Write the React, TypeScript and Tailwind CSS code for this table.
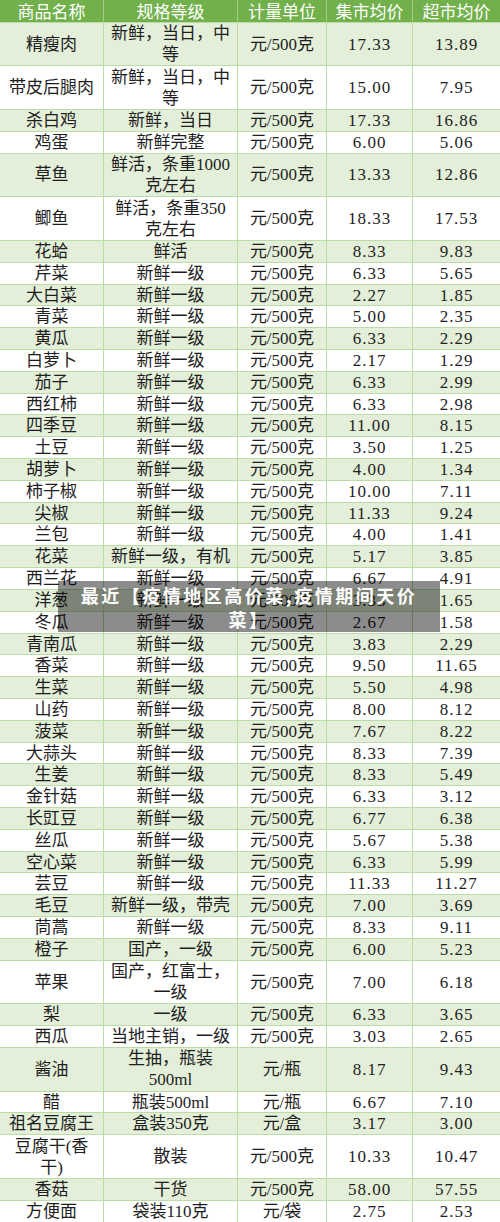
import React from "react";

type Row = [string, string, string, string, string];

const rows: Row[] = [
  ["精瘦肉", "新鲜，当日，中\n等", "元/500克", "17.33", "13.89"],
  ["带皮后腿肉", "新鲜，当日，中\n等", "元/500克", "15.00", "7.95"],
  ["杀白鸡", "新鲜，当日", "元/500克", "17.33", "16.86"],
  ["鸡蛋", "新鲜完整", "元/500克", "6.00", "5.06"],
  ["草鱼", "鲜活，条重1000\n克左右", "元/500克", "13.33", "12.86"],
  ["鲫鱼", "鲜活，条重350\n克左右", "元/500克", "18.33", "17.53"],
  ["花蛤", "鲜活", "元/500克", "8.33", "9.83"],
  ["芹菜", "新鲜一级", "元/500克", "6.33", "5.65"],
  ["大白菜", "新鲜一级", "元/500克", "2.27", "1.85"],
  ["青菜", "新鲜一级", "元/500克", "5.00", "2.35"],
  ["黄瓜", "新鲜一级", "元/500克", "6.33", "2.29"],
  ["白萝卜", "新鲜一级", "元/500克", "2.17", "1.29"],
  ["茄子", "新鲜一级", "元/500克", "6.33", "2.99"],
  ["西红柿", "新鲜一级", "元/500克", "6.33", "2.98"],
  ["四季豆", "新鲜一级", "元/500克", "11.00", "8.15"],
  ["土豆", "新鲜一级", "元/500克", "3.50", "1.25"],
  ["胡萝卜", "新鲜一级", "元/500克", "4.00", "1.34"],
  ["柿子椒", "新鲜一级", "元/500克", "10.00", "7.11"],
  ["尖椒", "新鲜一级", "元/500克", "11.33", "9.24"],
  ["兰包", "新鲜一级", "元/500克", "4.00", "1.41"],
  ["花菜", "新鲜一级，有机", "元/500克", "5.17", "3.85"],
  ["西兰花", "新鲜一级", "元/500克", "6.67", "4.91"],
  ["洋葱", "新鲜一级", "元/500克", "3.33", "1.65"],
  ["冬瓜", "新鲜一级", "元/500克", "2.67", "1.58"],
  ["青南瓜", "新鲜一级", "元/500克", "3.83", "2.29"],
  ["香菜", "新鲜一级", "元/500克", "9.50", "11.65"],
  ["生菜", "新鲜一级", "元/500克", "5.50", "4.98"],
  ["山药", "新鲜一级", "元/500克", "8.00", "8.12"],
  ["菠菜", "新鲜一级", "元/500克", "7.67", "8.22"],
  ["大蒜头", "新鲜一级", "元/500克", "8.33", "7.39"],
  ["生姜", "新鲜一级", "元/500克", "8.33", "5.49"],
  ["金针菇", "新鲜一级", "元/500克", "6.33", "3.12"],
  ["长豇豆", "新鲜一级", "元/500克", "6.77", "6.38"],
  ["丝瓜", "新鲜一级", "元/500克", "5.67", "5.38"],
  ["空心菜", "新鲜一级", "元/500克", "6.33", "5.99"],
  ["芸豆", "新鲜一级", "元/500克", "11.33", "11.27"],
  ["毛豆", "新鲜一级，带壳", "元/500克", "7.00", "3.69"],
  ["茼蒿", "新鲜一级", "元/500克", "8.33", "9.11"],
  ["橙子", "国产，一级", "元/500克", "6.00", "5.23"],
  ["苹果", "国产，红富士，\n一级", "元/500克", "7.00", "6.18"],
  ["梨", "一级", "元/500克", "6.33", "3.65"],
  ["西瓜", "当地主销，一级", "元/500克", "3.03", "2.65"],
  ["酱油", "生抽，瓶装\n500ml", "元/瓶", "8.17", "9.43"],
  ["醋", "瓶装500ml", "元/瓶", "6.67", "7.10"],
  ["祖名豆腐王", "盒装350克", "元/盒", "3.17", "3.00"],
  ["豆腐干(香\n干)", "散装", "元/500克", "10.33", "10.47"],
  ["香菇", "干货", "元/500克", "58.00", "57.55"],
  ["方便面", "袋装110克", "元/袋", "2.75", "2.53"],
];

const headers = ["商品名称", "规格等级", "计量单位", "集市均价", "超市均价"];

const body = { fontFamily: '"Liberation Serif", "Noto Sans CJK SC", serif' };
const head = { fontFamily: '"Noto Sans CJK SC", "Noto Sans", sans-serif' };

export default function App() {
  return (
    <div className="relative w-[500px] h-[1222px] overflow-hidden bg-white">
      <div className="grid grid-cols-[104px_134px_89px_86px_87px] h-[21.8px] bg-[#71b04a] text-white text-[17px]" style={head}>
        {headers.map((h, i) => (
          <div
            key={h}
            className={`flex items-center justify-center leading-[21px] ${i < 4 ? "border-r border-[#9fcc82]" : ""}`}
          >
            {h}
          </div>
        ))}
      </div>
      {rows.map((r, idx) => {
        const tall = r.some((c) => c.includes("\n"));
        return (
          <div
            key={idx}
            className={`grid grid-cols-[104px_134px_89px_86px_87px] text-[17px] text-[#1e1e1e] ${tall ? "h-[43.64px]" : "h-[21.82px]"} ${idx % 2 === 0 ? "bg-[#e3efd9]" : "bg-white"}`}
            style={body}
          >
            {r.map((c, i) => (
              <div
                key={i}
                className={`flex items-center justify-center text-center whitespace-pre-line leading-[21px] border-t border-[#bcdca6] ${i < 4 ? "border-r" : ""} ${i >= 3 ? "tracking-[1px]" : ""}`}
              >
                {c}
              </div>
            ))}
          </div>
        );
      })}

      <div className="absolute left-[58px] top-[581px] w-[382px] h-[51px] bg-black/45 flex flex-col items-center justify-center text-white font-bold text-[18px] leading-[24px] tracking-[2.5px]" style={head}>
        <span>最近【疫情地区高价菜,疫情期间天价</span>
        <span>菜】</span>
      </div>
    </div>
  );
}
